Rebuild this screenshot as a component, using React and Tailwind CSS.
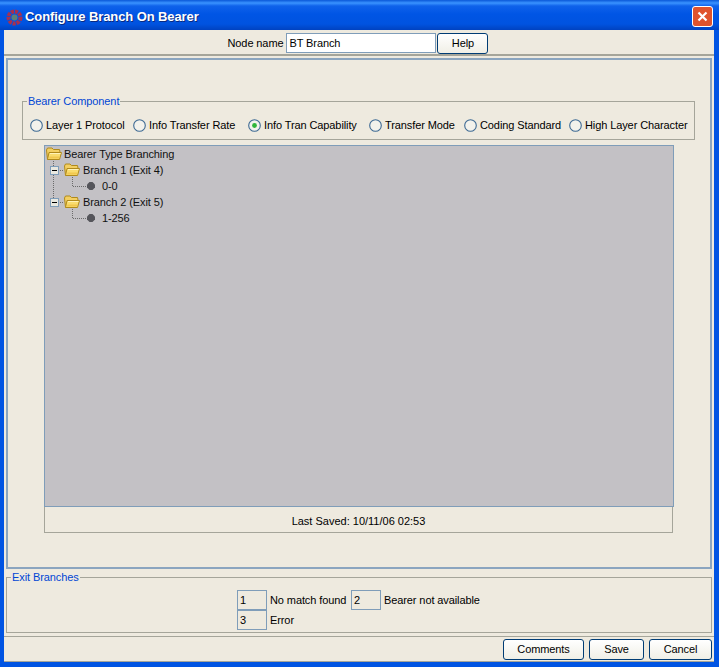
const FONT = "font-['Liberation_Sans','Noto_Sans',sans-serif]";

function Folder() {
  return (
    <svg width="16" height="14" viewBox="0 0 16 14" className="shrink-0">
      <path d="M1.5 12.5 L0.5 3 L1.5 1 L6 1 L7.5 2.5 L13.5 2.5 L14 5" fill="#f3cf62" stroke="#b08a1c" />
      <path d="M1.5 12.5 L3 5.5 L15.5 5.5 L13.5 12.5 Z" fill="#f9dc6e" stroke="#b08a1c" />
      <path d="M4 6.5 L14.5 6.5" stroke="#fff3b8" />
      <path d="M3.5 9.5 L13.5 9.5 L13 11.5 L3 11.5 Z" fill="#f1c74e" />
    </svg>
  );
}

function Handle() {
  return (
    <svg width="9" height="9" viewBox="0 0 9 9" className="shrink-0">
      <rect x="0.5" y="0.5" width="8" height="8" fill="#e9e8e0" stroke="#7f9db9" />
      <path d="M2 4.5 L7 4.5" stroke="#000" />
    </svg>
  );
}

function Dot() {
  return (
    <svg width="8" height="8" viewBox="0 0 8 8" className="shrink-0">
      <path d="M2.5 0 L5.5 0 L8 2.5 L8 5.5 L5.5 8 L2.5 8 L0 5.5 L0 2.5 Z" fill="#55555b" />
    </svg>
  );
}

function Radio({ label, checked, className }) {
  return (
    <div className={`flex items-center gap-[3px] shrink-0 ${className}`}>
      <svg width="13" height="13" viewBox="0 0 13 13" className="shrink-0">
        <circle cx="6.5" cy="6.5" r="5.8" fill="#f3f2ec" stroke="#3e6a94" strokeWidth="1.1" />
        {checked && <circle cx="6.5" cy="6.5" r="2.4" fill="#2fb53a" />}
      </svg>
      <span className="whitespace-nowrap">{label}</span>
    </div>
  );
}

function Btn({ label, className }) {
  return (
    <button className={`h-[21px] rounded-[3px] border border-[#003c74] bg-gradient-to-b from-white to-[#f0efe6] text-black text-center ${className}`}>
      {label}
    </button>
  );
}

function Legend({ children }) {
  return <span className="bg-[#eeeadf] px-[1px] text-[#0046d5] leading-[13px]">{children}</span>;
}

function TreeRow({ children, className }) {
  return <div className={`flex items-center h-[16px] ${className}`}>{children}</div>;
}

function BranchRow({ label }) {
  return (
    <TreeRow className="pl-[5px]">
      <Handle />
      <div className="ml-[5px]"><Folder /></div>
      <span className="ml-[3px]">{label}</span>
    </TreeRow>
  );
}

export default function App() {
  return (
    <div className={`w-[719px] h-[667px] flex flex-col bg-[#0054e3] text-[11px] tracking-[-0.1px] text-black overflow-hidden ${FONT}`}>
      {/* title bar */}
      <div className="h-[30px] shrink-0 flex items-center pl-[6px] pr-[6px] pt-[4px] bg-[linear-gradient(to_bottom,#0a58d8_0px,#3a93ff_3px,#0f62ea_6px,#0055e5_14px,#0053e0_24px,#0042c0_30px)]">
        <svg width="17" height="17" viewBox="0 0 17 17" className="shrink-0">
          <circle cx="8.5" cy="8.5" r="6" fill="none" stroke="#a8304f" strokeWidth="4" strokeDasharray="3 1" />
          <circle cx="8.5" cy="8.5" r="3" fill="#5f7f78" />
        </svg>
        <span className="ml-[2px] text-white font-bold text-[13px] whitespace-nowrap [text-shadow:1px_1px_0_#0a2a80]">Configure Branch On Bearer</span>
        <div className="ml-auto -mt-[1px] w-[21px] h-[21px] rounded-[3px] border border-white bg-[#e0532c] flex items-center justify-center">
          <svg width="13" height="13" viewBox="0 0 13 13">
            <path d="M2.5 2.5 L10.5 10.5 M10.5 2.5 L2.5 10.5" stroke="#fff" strokeWidth="2.2" />
          </svg>
        </div>
      </div>

      <div className="flex-1 ml-[4px] mr-[5px] mb-[5px] bg-[#eeeadf] flex flex-col min-h-0">
        {/* node name row */}
        <div className="h-[26px] shrink-0 pt-[2px] pr-[2px] border-b-2 border-[#a5a59a] flex items-center justify-center">
          <span className="mr-[3px]">Node name</span>
          <div className="w-[150px] h-[20px] bg-white border border-[#7f9db9] pl-[2px] flex items-center">BT Branch</div>
          <Btn label="Help" className="ml-[1px] w-[51px]" />
        </div>

        {/* main panel */}
        <div className="h-[511px] shrink-0 mt-[2px] mx-[2px] border-2 border-[#8ba5bf] flex flex-col">
          <div className="mt-[41px] ml-[14px] mr-[15px] h-[39px] shrink-0 border border-[#a5a59a] flex flex-col">
            <div className="-mt-[7px] ml-[4px] h-[13px] flex"><Legend>Bearer Component</Legend></div>
            <div className="flex items-center mt-[10px] pl-[7px] h-[14px]">
              <Radio label="Layer 1 Protocol" className="w-[103px]" />
              <Radio label="Info Transfer Rate" className="w-[115px]" />
              <Radio label="Info Tran Capability" checked className="w-[121px]" />
              <Radio label="Transfer Mode" className="w-[95px]" />
              <Radio label="Coding Standard" className="w-[105px]" />
              <Radio label="High Layer Character" />
            </div>
          </div>

          <div className="relative mt-[5px] ml-[36px] w-[630px] h-[362px] shrink-0 bg-[#c3c1c5] border border-[#7f9db9] text-[#111]">
            <svg width="60" height="80" viewBox="0 0 60 80" className="absolute left-0 top-0">
              <path d="M8.5 15 V52 M13 24.5 H19 M27.5 31 V40.5 H41 M13 56.5 H19 M27.5 63 V72.5 H41" stroke="#6b6b6b" strokeDasharray="1 1" fill="none" />
            </svg>
            <TreeRow className="relative"><div className="ml-[1px]"><Folder /></div><span className="ml-[2px]">Bearer Type Branching</span></TreeRow>
            <div className="relative">
              <BranchRow label="Branch 1 (Exit 4)" />
              <TreeRow className="pl-[42px]"><Dot /><span className="ml-[7px]">0-0</span></TreeRow>
              <BranchRow label="Branch 2 (Exit 5)" />
              <TreeRow className="pl-[42px]"><Dot /><span className="ml-[7px]">1-256</span></TreeRow>
            </div>
          </div>
          <div className="ml-[36px] w-[629px] h-[26px] shrink-0 pt-[3px] border-r border-b border-l border-[#a5a59a] flex items-center justify-center">
            <span className="tracking-normal">Last Saved: 10/11/06 02:53</span>
          </div>
        </div>

        {/* exit branches */}
        <div className="mt-[8px] mx-[2px] h-[56px] shrink-0 border border-[#a5a59a] flex flex-col">
          <div className="-mt-[7px] ml-[4px] h-[13px] flex"><Legend>Exit Branches</Legend></div>
          <div className="ml-[230px] mt-[6px] grid grid-cols-[30px_84px_30px_auto] grid-rows-[20px_20px] items-center w-max">
            <div className="h-[20px] border border-[#7f9db9] pl-[2px] flex items-center">1</div>
            <span className="ml-[3px]">No match found</span>
            <div className="h-[20px] border border-[#7f9db9] pl-[2px] flex items-center">2</div>
            <span className="ml-[3px]">Bearer not available</span>
            <div className="h-[20px] border border-[#7f9db9] pl-[2px] flex items-center">3</div>
            <span className="ml-[3px]">Error</span>
          </div>
        </div>

        {/* bottom buttons */}
        <div className="mt-[3px] flex-1 border-t border-b border-[#a5a59a] flex items-center justify-end pr-[2px] gap-[5px]">
          <Btn label="Comments" className="w-[81px]" />
          <Btn label="Save" className="w-[55px]" />
          <Btn label="Cancel" className="w-[63px]" />
        </div>
      </div>
    </div>
  );
}
